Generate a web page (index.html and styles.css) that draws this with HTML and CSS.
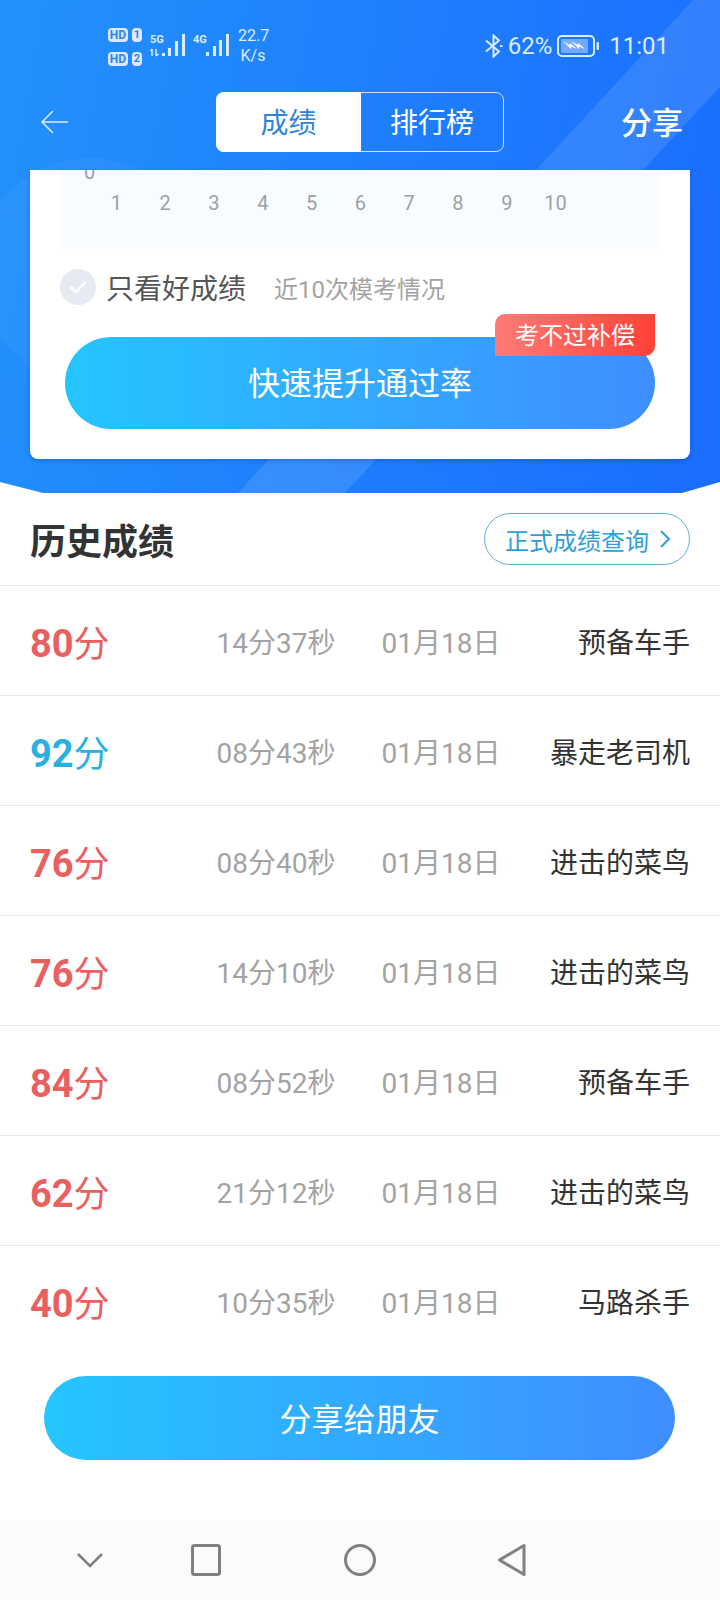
FILE: index.html
```html
<!DOCTYPE html>
<html lang="zh">
<head>
    <meta charset="UTF-8">
    <title>历史成绩</title>
    <link rel="stylesheet" href="styles.css">
</head>
<body>
    <div class="top">
        <svg class="decor" width="720" height="493" viewBox="0 0 720 493">
            <circle cx="90" cy="270" r="112" fill="#fff" fill-opacity="0.04"/>
            <polygon points="693,0 800,0 345,493 238,493" fill="#fff" fill-opacity="0.11"/>
        </svg>

        <div class="status">
            <div class="sim">
                <div class="sim-row"><span class="hd">HD</span><span class="sim-no">1</span></div>
                <div class="sim-row"><span class="hd">HD</span><span class="sim-no">2</span></div>
            </div>
            <div class="signal">
                <span class="net">5G</span>
                <svg width="36" height="24" viewBox="0 0 36 24" class="bars">
                    <path d="M2 15v7M0.500 17l1.500-2M6 15v7M8.500 20l-2.500 2" stroke="#dcebff" stroke-width="1.500" fill="none"/>
                    <rect x="12" y="19" width="3" height="3" fill="#dcebff"/>
                    <rect x="18" y="14" width="3" height="8" fill="#dcebff"/>
                    <rect x="25" y="7" width="3" height="15" fill="#dcebff"/>
                    <rect x="32" y="0" width="3" height="22" fill="#dcebff"/>
                </svg>
            </div>
            <div class="signal signal-4g">
                <span class="net">4G</span>
                <svg width="36" height="24" viewBox="0 0 36 24" class="bars">
                    <rect x="13" y="18" width="3" height="4" fill="#dcebff"/>
                    <rect x="20" y="12" width="3" height="10" fill="#dcebff"/>
                    <rect x="26" y="6" width="3" height="16" fill="#dcebff"/>
                    <rect x="33" y="0" width="3" height="22" fill="#dcebff"/>
                </svg>
            </div>
            <div class="speed">22.7<br>K/s</div>

            <div class="status-right">
                <svg width="20" height="24" viewBox="0 0 20 24" class="bt">
                    <path d="M2 6.500l13 11-5.500 5V1.500l5.500 5-13 11" fill="none" stroke="#dcebff" stroke-width="2"/>
                    <path d="M16 12h2.500" stroke="#dcebff" stroke-width="2"/>
                </svg>
                <span class="pct">62%</span>
                <svg width="44" height="24" viewBox="0 0 44 24" class="batt">
                    <rect x="1" y="2" width="36" height="20" rx="4" fill="none" stroke="#dcebff" stroke-width="2"/>
                    <rect x="4" y="5" width="27" height="14" rx="1" fill="#dcebff" fill-opacity="0.45"/>
                    <path d="M6 7l7 4v-2l7 6-6-2.500V15zM14 7l7 4v-2l7 6-6-2.500V15z" fill="#fff"/>
                    <rect x="39.500" y="8" width="2.500" height="8" rx="1" fill="#dcebff"/>
                </svg>
                <span class="clock">11:01</span>
            </div>
        </div>

        <div class="nav">
            <svg width="30" height="24" viewBox="0 0 30 24" class="back">
                <path d="M28 12H2M13 1L2 12l11 11" fill="none" stroke="#dcebff" stroke-width="1.500"/>
            </svg>
            <div class="tabs">
                <div class="tab tab-on">成绩</div>
                <div class="tab">排行榜</div>
            </div>
            <div class="nav-share">分享</div>
        </div>

        <div class="card">
            <div class="chart">
                <div class="y-zero">0</div>
                <div class="x-axis">
                    <span>1</span><span>2</span><span>3</span><span>4</span><span>5</span>
                    <span>6</span><span>7</span><span>8</span><span>9</span><span>10</span>
                </div>
            </div>
            <div class="filter">
                <span class="check">
                    <svg width="20" height="16" viewBox="0 0 20 16">
                        <path d="M2.500 8l5.500 5 9.500-10" fill="none" stroke="#fff" stroke-width="2.500"/>
                    </svg>
                </span>
                <span class="filter-label">只看好成绩</span>
                <span class="filter-note">近10次模考情况</span>
            </div>
            <div class="boost">
                快速提升通过率
                <span class="boost-tag">考不过补偿</span>
            </div>
        </div>
    </div>

    <div class="history-head">
        <h2>历史成绩</h2>
        <div class="query">正式成绩查询
            <svg width="12" height="20" viewBox="0 0 12 20">
                <path d="M2 2l8 8-8 8" fill="none" stroke="#2e9fd6" stroke-width="2"/>
            </svg>
        </div>
    </div>

    <div class="rows">
        <div class="row"><div class="score">80<i>分</i></div><div class="time">14分37秒</div><div class="date">01月18日</div><div class="rank">预备车手</div></div>
        <div class="row"><div class="score good">92<i>分</i></div><div class="time">08分43秒</div><div class="date">01月18日</div><div class="rank">暴走老司机</div></div>
        <div class="row"><div class="score">76<i>分</i></div><div class="time">08分40秒</div><div class="date">01月18日</div><div class="rank">进击的菜鸟</div></div>
        <div class="row"><div class="score">76<i>分</i></div><div class="time">14分10秒</div><div class="date">01月18日</div><div class="rank">进击的菜鸟</div></div>
        <div class="row"><div class="score">84<i>分</i></div><div class="time">08分52秒</div><div class="date">01月18日</div><div class="rank">预备车手</div></div>
        <div class="row"><div class="score">62<i>分</i></div><div class="time">21分12秒</div><div class="date">01月18日</div><div class="rank">进击的菜鸟</div></div>
        <div class="row"><div class="score">40<i>分</i></div><div class="time">10分35秒</div><div class="date">01月18日</div><div class="rank">马路杀手</div></div>
    </div>

    <div class="share">分享给朋友</div>

    <div class="softnav">
        <svg width="28" height="16" viewBox="0 0 28 16"><path d="M2 2l12 12L26 2" fill="none" stroke="#808080" stroke-width="2.500"/></svg>
        <svg width="30" height="32" viewBox="0 0 30 32"><rect x="1.500" y="1.500" width="27" height="29" rx="2" fill="none" stroke="#808080" stroke-width="3"/></svg>
        <svg width="32" height="32" viewBox="0 0 32 32"><circle cx="16" cy="16" r="14.500" fill="none" stroke="#808080" stroke-width="3"/></svg>
        <svg width="30" height="34" viewBox="0 0 30 34"><path d="M27 2.500v29L2.500 17z" fill="none" stroke="#808080" stroke-width="3" stroke-linejoin="round"/></svg>
    </div>
</body>
</html>
```

FILE: styles.css
```css
body {
    margin: 0;
    width: 720px;
    height: 1600px;
    overflow: hidden;
    background-color: #fff;
    font-family: Roboto, "Noto Sans CJK SC", sans-serif;
    color: #333;
}

/* blue header */
.top {
    position: relative;
    height: 493px;
    background: linear-gradient(100deg, #2391fb 0%, #1a6dff 100%);
    clip-path: polygon(0 0, 720px 0, 720px 482px, 682px 493px, 43px 493px, 0 482px);
}

.decor {
    position: absolute;
    left: 0;
    top: 0;
}

.status,
.nav,
.card {
    position: relative;
}

.status {
    display: flex;
    align-items: center;
    height: 92px;
    padding: 0 51px 0 108px;
    box-sizing: border-box;
    color: #dcebff;
}

.sim {
    display: flex;
    flex-direction: column;
    gap: 10px;
    margin-top: 1px;
}

.sim-row {
    display: flex;
    gap: 4px;
}

.hd,
.sim-no {
    display: block;
    height: 14px;
    line-height: 14px;
    border-radius: 4px;
    background-color: #dcebff;
    color: #2a84f6;
    font-size: 12px;
    font-weight: 700;
    text-align: center;
}

.hd {
    width: 20px;
}

.sim-no {
    width: 10px;
    font-size: 11px;
}

.signal {
    position: relative;
    margin-left: 8px;
    width: 36px;
    height: 24px;
    margin-top: -1px;
}

.signal-4g {
    margin-left: 7px;
}

.net {
    position: absolute;
    left: 0;
    top: 0;
    font-size: 11px;
    line-height: 12px;
    font-weight: 700;
}

.bars {
    position: absolute;
    right: 0;
    top: 0;
}

.speed {
    margin-left: 9px;
    width: 30px;
    text-align: center;
    font-size: 16px;
    line-height: 20px;
}

.status-right {
    display: flex;
    align-items: center;
    margin-left: auto;
    font-size: 24px;
}

.bt {
    margin-right: 4px;
}

.pct {
    margin-right: 5px;
}

.batt {
    margin-right: 8px;
}

.nav {
    display: flex;
    align-items: center;
    height: 60px;
    padding: 0 37px 0 40px;
}

.back {
    margin-right: 146px;
}

.tabs {
    display: flex;
    width: 288px;
    height: 60px;
    box-sizing: border-box;
    border: 1px solid #cfe2ff;
    border-radius: 8px;
}

.tab {
    flex: 1;
    text-align: center;
    font-size: 28px;
    line-height: 61px;
    color: #fff;
}

.tab-on {
    flex: none;
    width: 145px;
    margin: -1px 0 -1px -1px;
    line-height: 64px;
    background-color: #fff;
    border-radius: 8px 0 0 8px;
    color: #2f84d6;
}

.nav-share {
    margin-left: auto;
    margin-top: -3px;
    font-size: 31px;
    font-weight: 500;
    color: #fff;
}

/* card */
.card {
    width: 660px;
    height: 289px;
    margin: 18px 0 0 30px;
    background-color: #fff;
    border-radius: 0 0 8px 8px;
    box-shadow: 0 2px 4px rgba(0, 40, 120, 0.25);
}

.chart {
    position: relative;
    height: 79px;
    margin: 0 30px;
    overflow: hidden;
    background-color: #f8fbff;
    color: #a0a0a0;
    font-size: 20px;
}

.y-zero {
    position: absolute;
    left: 24px;
    top: -10px;
    font-size: 20px;
    line-height: 24px;
}

.x-axis {
    display: flex;
    padding: 20px 0 0 32px;
    line-height: 26px;
}

.x-axis span {
    width: 48.8px;
    text-align: center;
}

.filter {
    display: flex;
    align-items: center;
    height: 36px;
    margin: 20px 0 0 30px;
}

.check {
    display: flex;
    align-items: center;
    justify-content: center;
    width: 36px;
    height: 36px;
    margin-right: 10px;
    border-radius: 50%;
    background-color: #e8eaf3;
}

.filter-label {
    font-size: 28px;
    color: #555;
}

.filter-note {
    margin-left: 28px;
    font-size: 24px;
    color: #a3a3a3;
}

.boost {
    position: relative;
    width: 590px;
    height: 92px;
    margin: 32px 0 0 35px;
    border-radius: 46px;
    background: linear-gradient(90deg, #25c5ff 0%, #3f8eff 100%);
    color: #fff;
    font-size: 32px;
    line-height: 95px;
    text-align: center;
}

.boost-tag {
    position: absolute;
    right: 0;
    top: -23px;
    width: 160px;
    height: 42px;
    border-radius: 10px 0 10px 0;
    background: linear-gradient(90deg, #ff7b76 0%, #ff4238 100%);
    font-size: 24px;
    line-height: 45px;
}

/* history list */
.history-head {
    display: flex;
    align-items: center;
    justify-content: space-between;
    height: 93px;
    box-sizing: border-box;
    padding: 0 30px;
    border-bottom: 1px solid #e6e6e6;
}

.history-head h2 {
    margin: 0;
    font-size: 36px;
    font-weight: 700;
}

.query {
    display: flex;
    align-items: center;
    gap: 10px;
    height: 52px;
    box-sizing: border-box;
    padding: 0 18px 0 20px;
    border: 1px solid #62b2d2;
    border-radius: 26px;
    font-size: 24px;
    color: #2e9fd6;
}

.row {
    display: grid;
    grid-template-columns: 163px 166px 164px 167px;
    align-items: center;
    height: 110px;
    box-sizing: border-box;
    padding-left: 30px;
    border-bottom: 1px solid #e6e6e6;
}

.row:last-child {
    border-bottom: 0;
}

.score {
    font-size: 38px;
    font-weight: 700;
    color: #e86060;
}

.score i {
    font-style: normal;
    font-weight: 400;
    font-size: 36px;
}

.good {
    color: #2bb0e0;
}

.time,
.date {
    font-size: 28px;
    text-align: center;
    color: #a3a3a3;
}

.rank {
    font-size: 28px;
    text-align: right;
    color: #333;
}

.share {
    width: 631px;
    height: 84px;
    margin: 20px 0 0 44px;
    border-radius: 42px;
    background: linear-gradient(90deg, #25c5ff 0%, #3f8eff 100%);
    color: #fff;
    font-size: 32px;
    line-height: 88px;
    text-align: center;
}

/* android nav */
.softnav {
    display: flex;
    align-items: center;
    height: 80px;
    margin-top: 60px;
    padding-left: 76px;
    background-color: #fbfbfb;
}

.softnav svg:nth-child(2) {
    margin-left: 87px;
}

.softnav svg:nth-child(3) {
    margin-left: 123px;
}

.softnav svg:nth-child(4) {
    margin-left: 121px;
}
```
